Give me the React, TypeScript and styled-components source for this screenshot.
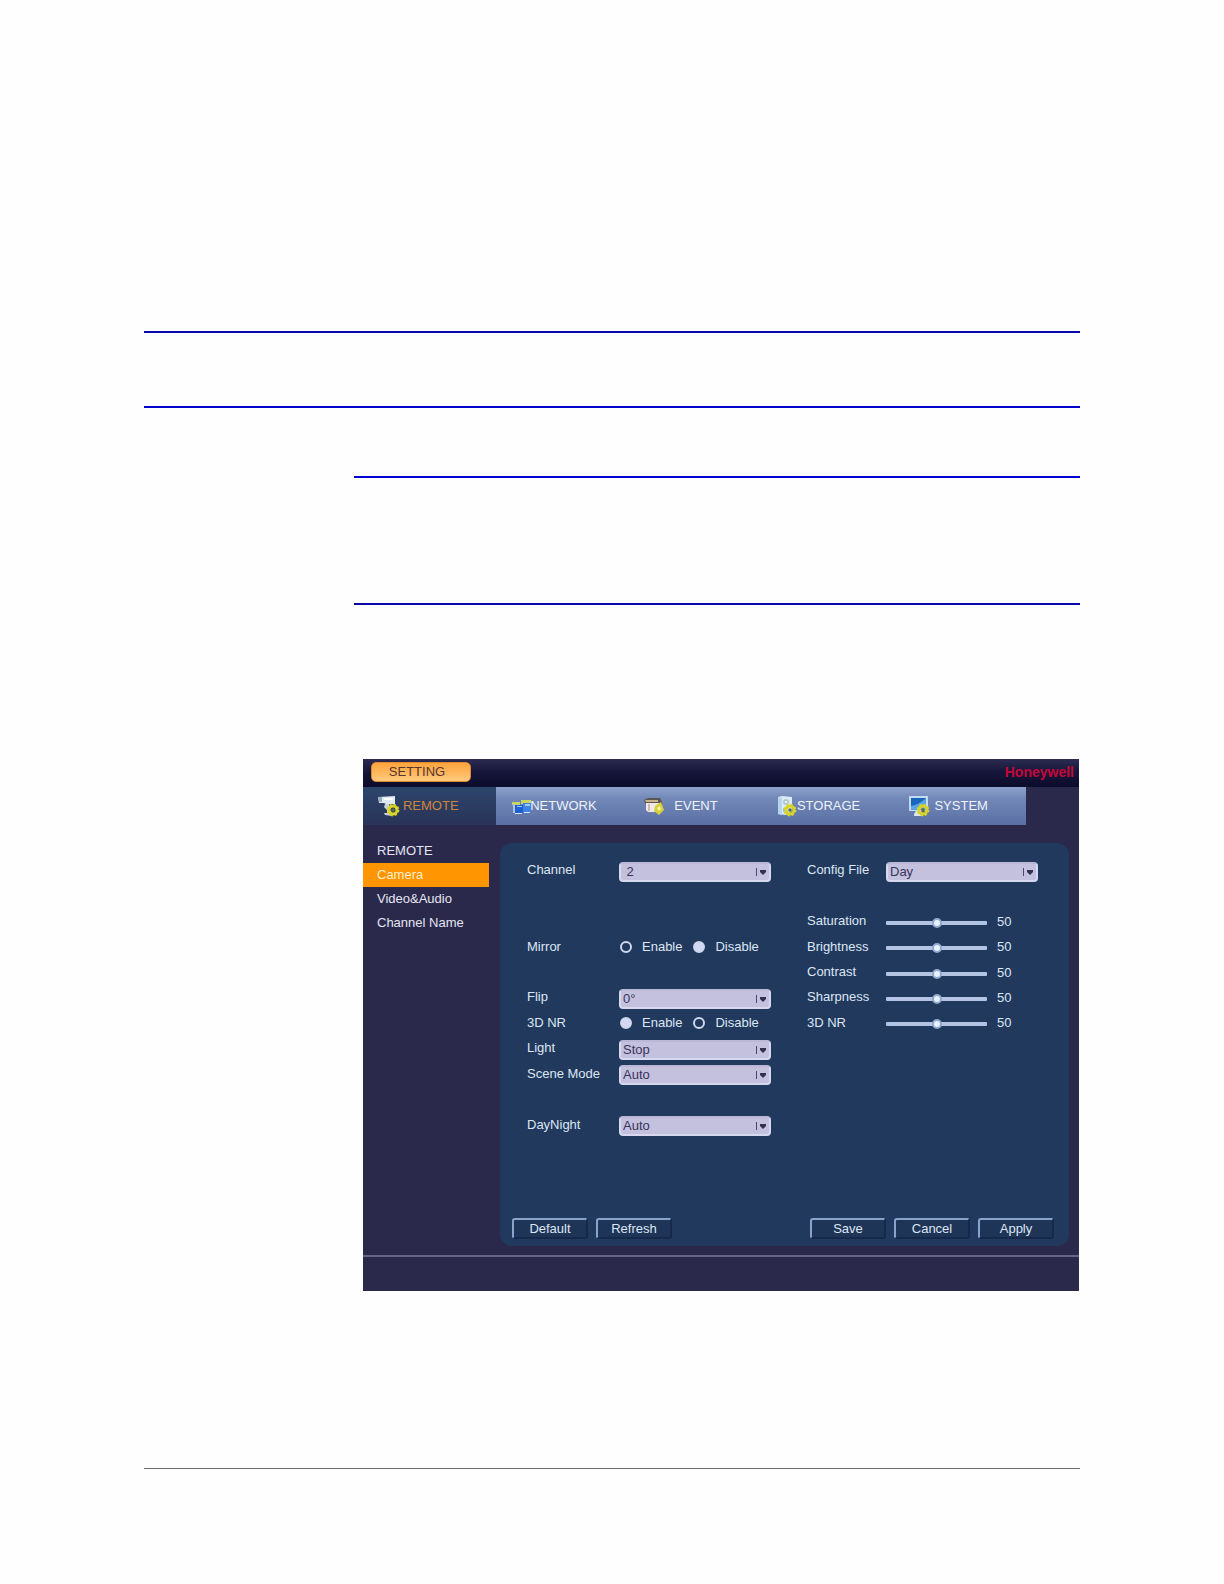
import React, { useState } from "react";
import styled, { createGlobalStyle } from "styled-components";

const GlobalStyle = createGlobalStyle`
  * { box-sizing: border-box; }
  body {
    margin: 0;
    background: #fefefe;
    font-family: "Liberation Sans", Arial, sans-serif;
    font-size: 13px;
    line-height: 16px;
  }
`;

const Page = styled.main`
  padding: 331px 144px 115px;
`;

const Rule = styled.hr<{ $color: string; $thin?: boolean }>`
  height: ${(p) => (p.$thin ? 1 : 2)}px;
  margin: 0;
  border: 0;
  background: ${(p) => p.$color};
`;

const HeadingArea = styled.div`
  height: 73px;
`;

const Body = styled.section`
  margin-top: 68px;
  padding-left: 210px;
`;

const NoteArea = styled.div`
  height: 125px;
`;

const Screen = styled.div`
  margin: 154px 1px 177px 9px;
  background: #2b294b;
  color: #dde6f4;
`;

const TitleBar = styled.header`
  display: flex;
  align-items: center;
  justify-content: space-between;
  height: 28px;
  padding: 0 5px 2px 8px;
  background: linear-gradient(#2c2b52, #17163a 45%, #0b0b2b);
`;

const SettingButton = styled.button`
  width: 100px;
  height: 20px;
  padding: 0 8px 0 0;
  border: 1px solid #e08a2c;
  border-radius: 5px;
  background: linear-gradient(#ffa53c, #ffb458 45%, #ffcb80);
  color: #5a3330;
  font: inherit;
  line-height: 16px;
`;

const Brand = styled.span`
  color: #c4083a;
  font-size: 14px;
  font-weight: bold;
`;

const Tabs = styled.nav`
  display: grid;
  grid-template-columns: repeat(5, 1fr);
  height: 38px;
  margin-right: 53px;
  background: linear-gradient(#8ea2cc, #7288b8 30%, #5a6fa4);
`;

const Tab = styled.button<{ $active: boolean }>`
  display: grid;
  align-items: center;
  padding: 0 0 0 15px;
  border: 0;
  background: ${(p) => (p.$active ? "linear-gradient(#2d456b, #2b3a60 60%, #2a3358)" : "transparent")};
  color: ${(p) => (p.$active ? "#d0853a" : "#eef2fa")};
  font: inherit;
  text-align: left;

  > * { grid-area: 1 / 1; }
`;

const TabIcon = styled.svg`
  width: 22px;
  height: 22px;
`;

const TabText = styled.span`
  justify-self: center;
  padding-right: 12px;
`;

const Workspace = styled.div`
  display: flex;
  padding: 14px 10px 9px 0;
`;

const Sidebar = styled.nav`
  display: flex;
  flex-direction: column;
  width: 126px;
  margin-right: 11px;
`;

const SideItem = styled.a<{ $active?: boolean }>`
  height: 24px;
  padding-left: 14px;
  background: ${(p) => (p.$active ? "#ff9500" : "transparent")};
  color: ${(p) => (p.$active ? "#ffeecb" : "#e4e6f2")};
  line-height: 24px;
  text-decoration: none;
`;

const Panel = styled.form`
  display: flex;
  flex: 1;
  flex-direction: column;
  gap: 79px;
  margin-top: 4px;
  padding: 16px 15px 7px 12px;
  border-radius: 12px;
  background: #21395d;
`;

const Columns = styled.div`
  display: grid;
  grid-template-columns: 244fr 231fr;
  gap: 36px;
  height: 280px;
  padding: 0 16px 0 15px;
`;

const Column = styled.div`
  display: grid;
  grid-template-rows: repeat(11, 1fr);
`;

const Row = styled.div<{ $line: number; $label: number }>`
  display: grid;
  grid-row: ${(p) => p.$line};
  grid-template-columns: ${(p) => p.$label}px 1fr;
  align-items: center;
`;

const Caption = styled.label`
  padding-bottom: 3px;
`;

const SelectBox = styled.div`
  position: relative;
`;

const Select = styled.select`
  display: block;
  width: 100%;
  height: 20px;
  padding: 0 20px 0 2px;
  appearance: none;
  border: 2px solid #d6d8f0;
  border-top-color: #b9b8d6;
  border-radius: 4px;
  background: #c4c1de;
  color: #39345a;
  font: inherit;
  line-height: 16px;
`;

const SelectMark = styled.svg`
  position: absolute;
  top: 5px;
  right: 3px;
  width: 13px;
  height: 10px;
  pointer-events: none;
`;

const RadioGroup = styled.div`
  display: flex;
  gap: 10px;
  padding-bottom: 3px;
`;

const RadioLabel = styled.label`
  display: flex;
  align-items: center;
  gap: 10px;
`;

const Radio = styled.input`
  width: 12px;
  height: 12px;
  margin: 0 0 0 1px;
  appearance: none;
  border: 2px solid #cdd8ec;
  border-radius: 50%;

  &:checked { background: #d4d8f4; }
`;

const SliderBox = styled.div`
  display: flex;
  align-items: center;
  gap: 10px;
`;

const Slider = styled.input`
  width: 101px;
  height: 12px;
  margin: 0;
  appearance: none;
  background: transparent;

  &::-webkit-slider-runnable-track {
    height: 4px;
    border-radius: 1px;
    background: #b3c4e4;
  }

  &::-webkit-slider-thumb {
    width: 10px;
    height: 10px;
    margin-top: -3px;
    appearance: none;
    border: 2px solid #93a8cd;
    border-radius: 50%;
    background: #e8f2fc;
  }
`;

const Value = styled.output`
  padding-bottom: 2px;
`;

const Actions = styled.div`
  display: flex;
  justify-content: space-between;
`;

const ButtonGroup = styled.div`
  display: flex;
  gap: 8px;
`;

const ActionButton = styled.button`
  width: 76px;
  height: 21px;
  padding: 0;
  border: 2px solid;
  border-color: #8ba3cb #17294a #17294a #8ba3cb;
  border-radius: 3px;
  background: #1f3558;
  color: #dde6f4;
  font: inherit;
  line-height: 17px;
`;

const StatusBar = styled.footer`
  height: 36px;
  border-top: 2px solid #6a6588;
`;

function Gear({ x, y }: { x: number; y: number }) {
  return (
    <g transform={`translate(${x} ${y})`}>
      <circle r="4" fill="none" stroke="#d9d326" strokeWidth="3" />
      <circle r="5.6" fill="none" stroke="#d9d326" strokeWidth="1.6" strokeDasharray="2.2 2.2" />
      <circle r="1.8" fill="#5a6a48" />
    </g>
  );
}

function CameraIcon() {
  return (
    <TabIcon viewBox="0 0 22 22" aria-hidden="true">
      <path d="M0 2l17-1v8H8L6 8H1z" fill="#dfe8ee" />
      <path d="M0 2h4v5H1z" fill="#9dafbd" />
      <path d="M6 3h9v2H6z" fill="#fff" />
      <path d="M7 9h4v6l3 2v4l-7-1-1-2h3v-3l-3-3z" fill="#c5d3de" />
      <Gear x={15} y={15} />
    </TabIcon>
  );
}

function NetworkIcon() {
  return (
    <TabIcon viewBox="0 0 22 22" aria-hidden="true">
      <path d="M1 7h8v3H1zM10 5h10v4H10z" fill="#c9d65a" />
      <path d="M2 9h3v9H2z" fill="#a9c4ee" />
      <path d="M4 10h8v8H4z" fill="#1f5fd0" />
      <path d="M12 8h8v9h-8z" fill="#3f83e4" />
      <path d="M6 11h5v1H6zM14 9h5v2h-5z" fill="#9cc8fa" />
      <path d="M4 18h7v1H4zM13 17h6v1h-6z" fill="#d8e5f8" />
    </TabIcon>
  );
}

function EventIcon() {
  return (
    <TabIcon viewBox="0 0 22 22" aria-hidden="true">
      <path d="M1 5l4-2h12l2 4v3H3z" fill="#5b5652" />
      <path d="M2 5h13v2H3z" fill="#c9b48a" />
      <path d="M3 8h13v9H5l-2-2z" fill="#efe9e8" />
      <path d="M5 9h2v7H5z" fill="#d4b7b4" />
      <path d="M12 11l6-4 3 8-5 5-5-4z" fill="#d9cf3a" />
      <path d="M14 13l3-2 1 3-2 2z" fill="#f8f4ad" />
    </TabIcon>
  );
}

function StorageIcon() {
  return (
    <TabIcon viewBox="0 0 22 22" aria-hidden="true">
      <path d="M2 2l4-1 10 1v14l-6 4-8-1z" fill="#dcebf4" />
      <path d="M2 2l4 1v17l-4-1z" fill="#b7d6ee" />
      <circle cx="10" cy="7" r="3" fill="#b1c8d4" />
      <circle cx="10" cy="7" r="1" fill="#fff" />
      <path d="M7 13h4v4H7z" fill="#a7bfd0" />
      <Gear x={14} y={15} />
    </TabIcon>
  );
}

function SystemIcon() {
  return (
    <TabIcon viewBox="0 0 22 22" aria-hidden="true">
      <path d="M1 1h19v15H1z" fill="#c3daf3" />
      <path d="M3 3h15v12H3z" fill="#1767bd" />
      <path d="M3 11C8 10 13 8 18 3v12H3z" fill="#5aa4e6" />
      <path d="M8 16h5l2 3v2H6v-2z" fill="#dde6ef" />
      <Gear x={15} y={15} />
    </TabIcon>
  );
}

const tabs = [
  { name: "REMOTE", Icon: CameraIcon },
  { name: "NETWORK", Icon: NetworkIcon },
  { name: "EVENT", Icon: EventIcon },
  { name: "STORAGE", Icon: StorageIcon },
  { name: "SYSTEM", Icon: SystemIcon },
];

function SelectRow(props: { id: string; label: string; line: number; labelWidth: number; value: string }) {
  return (
    <Row $line={props.line} $label={props.labelWidth}>
      <Caption htmlFor={props.id}>{props.label}</Caption>
      <SelectBox>
        <Select id={props.id} defaultValue={props.value}>
          <option value={props.value}>{props.value}</option>
        </Select>
        <SelectMark viewBox="0 0 13 10" aria-hidden="true">
          <path d="M1 1h1v8H1z" fill="#4b466c" />
          <path d="M5 3h6v2L8 8 5 5z" fill="#332e52" />
        </SelectMark>
      </SelectBox>
    </Row>
  );
}

function RadioRow(props: { id: string; label: string; line: number; value: string }) {
  return (
    <Row $line={props.line} $label={92} role="radiogroup" aria-labelledby={props.id}>
      <Caption as="span" id={props.id}>{props.label}</Caption>
      <RadioGroup>
        {["Enable", "Disable"].map((option) => (
          <RadioLabel key={option}>
            <Radio type="radio" name={props.id} value={option} defaultChecked={option === props.value} />
            {option}
          </RadioLabel>
        ))}
      </RadioGroup>
    </Row>
  );
}

function SliderRow(props: { id: string; label: string; line: number }) {
  const [value, setValue] = useState(50);
  return (
    <Row $line={props.line} $label={79}>
      <Caption htmlFor={props.id}>{props.label}</Caption>
      <SliderBox>
        <Slider
          id={props.id}
          type="range"
          min={0}
          max={100}
          value={value}
          onChange={(e) => setValue(Number(e.target.value))}
        />
        <Value htmlFor={props.id}>{value}</Value>
      </SliderBox>
    </Row>
  );
}

export default function App() {
  const [tab, setTab] = useState("REMOTE");
  return (
    <>
      <GlobalStyle />
      <Page>
        <Rule $color="#0808a8" />
        <HeadingArea />
        <Rule $color="#0404cc" />
        <Body>
          <Rule $color="#0202d2" />
          <NoteArea />
          <Rule $color="#0808a8" />
          <Screen>
            <TitleBar>
              <SettingButton type="button">SETTING</SettingButton>
              <Brand>Honeywell</Brand>
            </TitleBar>
            <Tabs>
              {tabs.map(({ name, Icon }) => (
                <Tab key={name} type="button" $active={name === tab} onClick={() => setTab(name)}>
                  <Icon />
                  <TabText>{name}</TabText>
                </Tab>
              ))}
            </Tabs>
            <Workspace>
              <Sidebar>
                <SideItem href="#remote">REMOTE</SideItem>
                <SideItem href="#camera" $active>Camera</SideItem>
                <SideItem href="#video-audio">Video&amp;Audio</SideItem>
                <SideItem href="#channel-name">Channel Name</SideItem>
              </Sidebar>
              <Panel onSubmit={(e) => e.preventDefault()}>
                <Columns>
                  <Column>
                    <SelectRow id="channel" label="Channel" line={1} labelWidth={92} value={"\u00a02"} />
                    <RadioRow id="mirror" label="Mirror" line={4} value="Disable" />
                    <SelectRow id="flip" label="Flip" line={6} labelWidth={92} value="0°" />
                    <RadioRow id="noise" label="3D NR" line={7} value="Enable" />
                    <SelectRow id="light" label="Light" line={8} labelWidth={92} value="Stop" />
                    <SelectRow id="scene" label="Scene Mode" line={9} labelWidth={92} value="Auto" />
                    <SelectRow id="daynight" label="DayNight" line={11} labelWidth={92} value="Auto" />
                  </Column>
                  <Column>
                    <SelectRow id="config" label="Config File" line={1} labelWidth={79} value="Day" />
                    <SliderRow id="saturation" label="Saturation" line={3} />
                    <SliderRow id="brightness" label="Brightness" line={4} />
                    <SliderRow id="contrast" label="Contrast" line={5} />
                    <SliderRow id="sharpness" label="Sharpness" line={6} />
                    <SliderRow id="noise-level" label="3D NR" line={7} />
                  </Column>
                </Columns>
                <Actions>
                  <ButtonGroup>
                    <ActionButton type="reset">Default</ActionButton>
                    <ActionButton type="button">Refresh</ActionButton>
                  </ButtonGroup>
                  <ButtonGroup>
                    <ActionButton type="submit">Save</ActionButton>
                    <ActionButton type="button">Cancel</ActionButton>
                    <ActionButton type="button">Apply</ActionButton>
                  </ButtonGroup>
                </Actions>
              </Panel>
            </Workspace>
            <StatusBar />
          </Screen>
        </Body>
        <Rule $color="#6a6a6a" $thin />
      </Page>
    </>
  );
}
